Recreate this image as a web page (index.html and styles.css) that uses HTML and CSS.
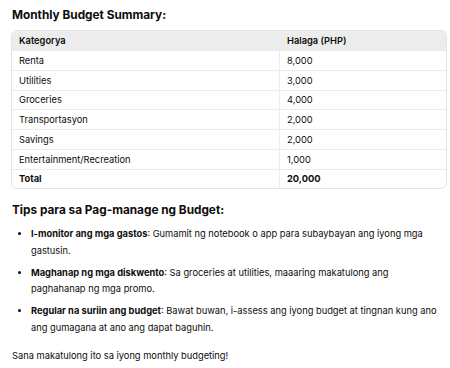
FILE: index.html
```html
<!DOCTYPE html>
<html>
<head>
<meta charset="utf-8">
<link rel="stylesheet" href="styles.css">
</head>
<body>
<div class="page">
  <h3 class="title">Monthly Budget Summary:</h3>
  <div class="table">
    <div class="row head"><div class="cell">Kategorya</div><div class="cell">Halaga (PHP)</div></div>
    <div class="row"><div class="cell">Renta</div><div class="cell">8,000</div></div>
    <div class="row"><div class="cell">Utilities</div><div class="cell">3,000</div></div>
    <div class="row"><div class="cell">Groceries</div><div class="cell">4,000</div></div>
    <div class="row"><div class="cell">Transportasyon</div><div class="cell">2,000</div></div>
    <div class="row"><div class="cell">Savings</div><div class="cell">2,000</div></div>
    <div class="row"><div class="cell">Entertainment/Recreation</div><div class="cell">1,000</div></div>
    <div class="row total"><div class="cell">Total</div><div class="cell">20,000</div></div>
  </div>
  <h3 class="title tips-title">Tips para sa Pag-manage ng Budget:</h3>
  <ul class="tips">
    <li><strong>I-monitor ang mga gastos</strong>: Gumamit ng notebook o app para subaybayan ang iyong mga gastusin.</li>
    <li><strong>Maghanap ng mga diskwento</strong>: Sa groceries at utilities, maaaring makatulong ang paghahanap ng mga promo.</li>
    <li><strong>Regular na suriin ang budget</strong>: Bawat buwan, i-assess ang iyong budget at tingnan kung ano ang gumagana at ano ang dapat baguhin.</li>
  </ul>
  <p class="closing">Sana makatulong ito sa iyong monthly budgeting!</p>
</div>
</body>
</html>
```
FILE: styles.css
```css
html, body {
  margin: 0;
  padding: 0;
  background: #ffffff;
}
body {
  font-family: Inter, "Noto Sans", sans-serif;
  color: #0d0d0d;
}
.page {
  padding: 8px 5px 0 12px;
}
.title {
  margin: 0;
  font-size: 11.8px;
  font-weight: 700;
  line-height: 15px;
}
.table {
  margin: 7px 0 0 -1px;
  width: 434px;
  border: 1px solid #e3e3e3;
  border-radius: 6px;
  overflow: hidden;
  font-size: 9.3px;
}
.row {
  display: grid;
  grid-template-columns: 268px 1fr;
  height: 18.75px;
  border-top: 1px solid #ececec;
}
.row.head {
  border-top: none;
  height: 19px;
  background: #ececec;
  font-weight: 600;
}
.cell {
  display: flex;
  align-items: center;
  padding: 0 8px 0 7px;
}
.cell:first-child {
  border-right: 1px solid #ececec;
}
.total {
  font-weight: 700;
}
.tips-title {
  margin-top: 14px;
}
.tips {
  margin: 8px 0 0;
  padding-left: 19px;
  font-size: 9.3px;
  line-height: 16.5px;
}
.tips li {
  margin-bottom: 5.5px;
}
.tips li::marker {
  font-size: 9px;
}
.tips strong {
  font-weight: 700;
}
.closing {
  margin: 12px 0 0;
  font-size: 9.3px;
  line-height: 16.5px;
}
```
